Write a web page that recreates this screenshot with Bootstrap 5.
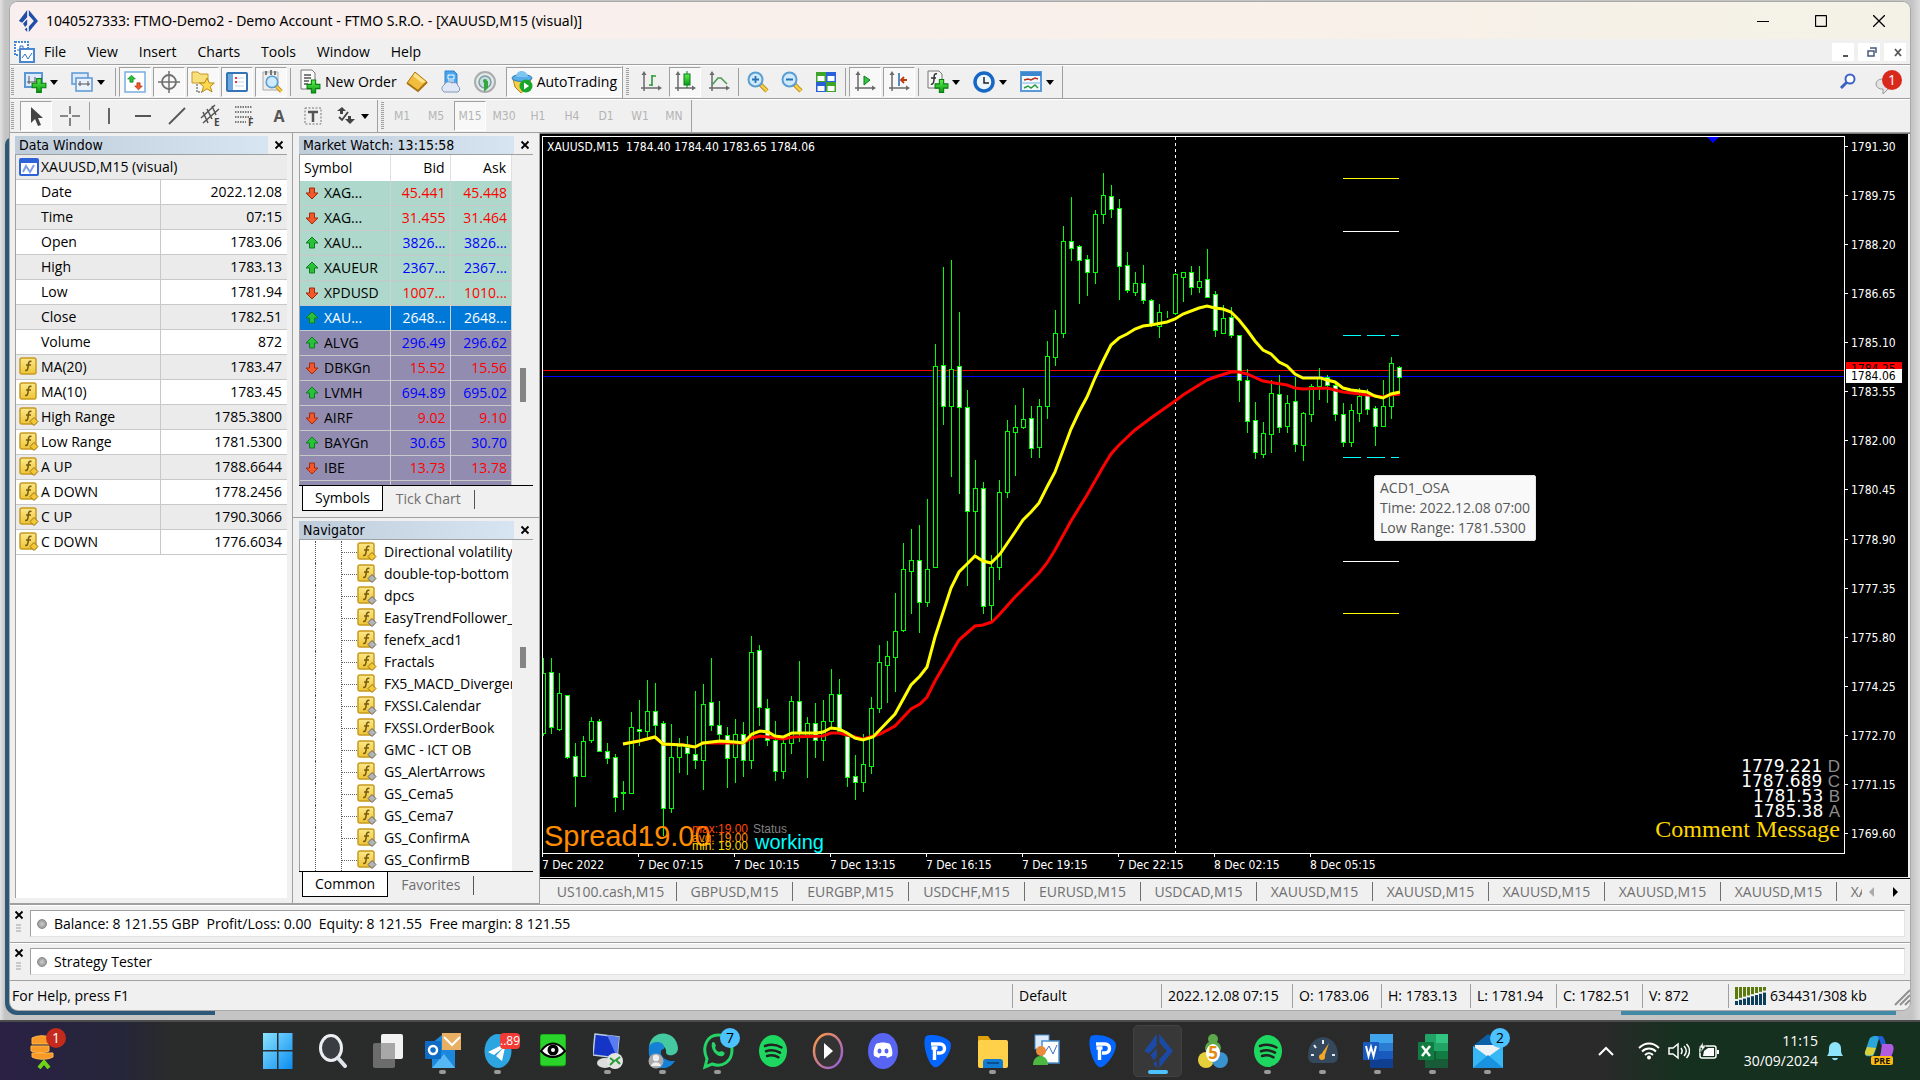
<!DOCTYPE html>
<html lang="en">
<head>
<meta charset="utf-8">
<meta name="viewport" content="width=device-width, initial-scale=1">
<title>Trading terminal</title>
<link href="https://cdn.jsdelivr.net/npm/bootstrap@5.3.0/dist/css/bootstrap.min.css" rel="stylesheet">
<style>
:root{--face:#f0f0f0;--line:#a0a0a0;--ui:"Open Sans","Noto Sans",sans-serif;--tah:"DejaVu Sans Condensed","Noto Sans",sans-serif}
body{font-family:var(--ui);font-size:14px;line-height:20px;color:#000;background:#cfcfcf;overflow:hidden}
button{font:inherit;color:inherit;border:0;background:none;padding:0}
svg{display:block;flex:none}
.desk{background:linear-gradient(90deg,#e2e2e2,#c4c4c4 5px,#c4c4c4 calc(100% - 8px),#dcdcdc);padding:2px 10px 10px}
.backwin{left:5px;top:137px;bottom:5px;width:210px;background:#2d5878;border-radius:8px 0 0 12px}
.backteal{right:24px;bottom:5px;width:275px;height:6px;background:#4289a5}
.appwin{background:var(--face);border-radius:8px;overflow:hidden;position:relative;box-shadow:0 0 0 1px #a9a9a9}
.titlebar{height:37px;padding-right:2px;background:linear-gradient(90deg,#f9efef,#f9f0ea 60%,#f4f2e6)}
.titlebar .ttl{font-family:"Noto Sans","Open Sans",sans-serif}
.titlebar .wbtn{width:58px;height:37px}
.menubar{height:26px;border-bottom:1px solid var(--line)}
.menubar a{color:#000;text-decoration:none;padding:0 11px 0 10px}
.menubar svg{margin:0 -2px 0 4px}
.tbar{height:34px;border-bottom:1px solid var(--line);border-top:1px solid #fff}
.tgroup{height:32px;border-right:1px solid var(--line)}
.tgroup + .tgroup{margin-left:2px}
.grip{width:3px;height:28px;margin:0 5px 0 1px;background:repeating-linear-gradient(#a0a0a0 0 1px,#f0f0f0 1px 2px)}
.tf .grip{margin-right:1px}
.tb{width:32px;height:30px;margin:0 1px;display:flex;align-items:center;justify-content:center}
.tb.on,.tbx.on{background:#f8f8f8;border-left:1px solid var(--line);border-top:1px solid var(--line);border-right:1px solid #fff;border-bottom:1px solid #fff}
.tbx{height:30px;display:flex;align-items:center}
.tdd{width:47px;height:30px;display:flex;align-items:center;padding-left:4px;gap:3px}
.caret{width:0;height:0;border:4px solid transparent;border-top:5px solid #000;border-bottom:0}
.tsep{width:1px;height:28px;background:var(--line);margin:0 2px}
.tf{font-family:var(--tah);font-size:12px;color:#b4b4b4}
.dock{border-right:1px solid var(--line);border-bottom:1px solid var(--line)}
.dockw{width:283px;padding:3px 5px 5px}
.docks{width:247px}
.ptitle{height:18px;font-family:var(--tah);font-size:14px;line-height:18px;margin-right:-5px}
.ptitle .cap{width:253px;padding-left:4px;background:linear-gradient(90deg,#bfcddb,#d7e4f2)}
.docks .ptitle .cap{width:215px}
.ptitle button{width:22px;height:18px;flex:none;display:flex;align-items:center;justify-content:center}
.pane{background:#fff;border-top:1px solid var(--line);border-left:1px solid var(--line)}
.grid{width:100%;table-layout:fixed;border-collapse:separate;border-spacing:0}
.grid td,.grid th{height:25px;line-height:24px;padding:0 5px 0 0;border-bottom:1px solid #c8c8c8;font-weight:400;white-space:nowrap;overflow:hidden}
.grid .ic{display:inline-flex;align-items:center;justify-content:center;vertical-align:top;height:24px;width:24px}
.dw tr:nth-child(odd){background:#ebebeb}
.dw .ic{width:25px}
.dw td{border-left:1px solid #c8c8c8;text-align:right}
.mw .hd th{height:26px;border-right:1px solid #e0e0e0;border-bottom:0;text-align:right}
.mw td{border-right:1px solid #d0d0d0}
.mw td:not(:first-child){text-align:right;padding-right:4px}
.mw .grn{background:#aed8cb}.mw .prp{background:#928db0}.mw .sel{background:#0078d7;color:#fff}
.mw .dn td:not(:first-child){color:#f00}.mw .up td:not(:first-child){color:#00f}
.mw .sel td:not(:first-child){color:#fff}
.wfill{width:0}
.sbar{width:21px;flex:none;background:var(--face);position:relative}
.sbar i{position:absolute;left:8px;width:6px;background:#858585}
.sbar .t1{top:213px;height:34px}
.sbar .t2{top:107px;height:21px}
.ptabs{height:27px;border-top:1px solid #000;background:var(--face)}
.ptabs button{height:25px;color:#6f6f6f;padding:0 13px}
.ptabs .act{background:#fff;border:1px solid #000;border-top:0;color:#000;margin-left:3px;padding:0 12px}
.ptabs .bar{width:1px;height:19px;background:#555;margin-top:4px}
.mwpanel{height:385px;padding:3px 6px 5px;border-bottom:1px solid var(--line)}
.nvpanel{padding:3px 6px 5px}
.mwlist{height:330px;overflow:hidden}
.navpane{height:0}
.tree{overflow:hidden;padding-top:1px}
.tree li{height:22px;line-height:22px;white-space:nowrap;padding-left:15px;display:flex;align-items:center}
.tree i{flex:none}
.tree .b1{width:26px;height:22px;border-left:1px dotted #555}
.tree .b2{width:16px;height:22px;border-left:1px dotted #555;background:repeating-linear-gradient(90deg,#666 0 1px,transparent 1px 2px) 0 11px/100% 1px no-repeat}
.tree svg{margin:0 7px 0 0}
.workarea{min-height:0}
.chartcol{border-top:1px solid #777;min-width:0}
.chartbox{background:#000;margin-right:2px;padding:2px 0 0 2px;color:#fff;font-family:var(--tah);font-size:12px;line-height:14px}
.plot{border:1px solid #fff;position:relative;min-width:0;overflow:hidden}
.ohlc{left:4px;top:3px;white-space:pre}
.paxis{width:63px;position:relative;padding:4px 0 13px}
.paxis span{padding-left:6px;position:relative}
.paxis span::before{content:"";position:absolute;left:-1px;top:6px;width:4px;height:1px;background:#fff}
.nowtag,.asktag{position:absolute;left:1px;width:56px;height:14px;padding-left:5px;color:#000}
.nowtag{top:233px;background:#fff}
.asktag{top:226px;background:#f00}
.taxis{height:23px;overflow:hidden}
.taxis span{width:96px;flex:none;position:relative;padding-top:4px;white-space:nowrap}
.taxis span::before{content:"";position:absolute;left:0;top:0;width:1px;height:3px;background:#fff}
.lvl{position:absolute;right:4px;bottom:14px;text-align:right}
.lvl div{font:17px/15px "DejaVu Sans",sans-serif}
.lvl b{font-weight:400;color:#8c8c8c;display:inline-block;font-family:"Liberation Sans",sans-serif}
.lvl .cm{font:24px/20px "Liberation Serif",serif;color:#ffd700}
.tip{position:absolute;left:831px;top:338px;background:#f9f9f9;border:1px solid #e5e5e5;border-radius:2px;color:#575757;font-family:var(--ui);font-size:14px;line-height:20px;padding:2px 5px;white-space:nowrap}
.ctabs{height:26px;border-top:1px solid #000;margin-top:1px;color:#6f6f6f}
.ctabs button{width:116px;flex:none;height:19px;line-height:19px;border-right:1px solid #6f6f6f;white-space:nowrap}
.ctabs button:first-child{width:132px;margin-left:5px}
.ctabs .scr{width:auto;border:0}
.infobar{height:38px;border-top:1px solid var(--line);box-shadow:inset 0 1px #fff;padding:5px 5px 5px 4px}
.infobar .box{border:1px solid #e3e3e3;border-top-color:var(--line);border-left-color:var(--line);background:#fff;padding-left:6px;gap:7px;white-space:pre}
.infobar .side{width:16px}
.dot{width:10px;height:10px;border-radius:50%;background:radial-gradient(#ccc,#888);border:1px solid #888}
.status{height:30px;border-top:1px solid var(--line);padding:1px 0 0 2px}
.status span{border-left:1px solid var(--line);height:24px;line-height:24px;padding-left:6px;white-space:nowrap;flex:none}
.status .s150{width:149px}.status .s130{width:131px}.status .s90{width:89px}.status .s86{width:86px}.status .s180{width:182px}
.taskbar{height:60px;background:linear-gradient(90deg,#2a2144,#25263a 120px,#2a2b2b 170px,#2a2a2a 1600px,#16301f 1680px,#16301f);border-top:2px solid #4c4c4c;color:#fff}
.widg{width:250px}
.tk{width:55px;height:58px;position:relative;display:flex;align-items:center;justify-content:center}
.tk.run::after{content:"";position:absolute;bottom:6px;left:24px;width:7px;height:4px;border-radius:2px;background:#9a9a9a}
.tk.cur::before{content:"";position:absolute;inset:3px;background:#383838;border:1px solid #424242;border-radius:5px}
.tk.cur::after{content:"";position:absolute;bottom:6px;left:18px;width:20px;height:4px;border-radius:2px;background:#4cc2ff}
.tk svg{position:relative}
.nb{position:absolute;z-index:2;left:30px;top:6px;width:20px;height:20px;border-radius:10px;background:#4cc2ff;color:#000;font-size:14px;line-height:20px;text-align:center}
.nb.red{background:#c42b1c;color:#fff}
.nb.tg{background:#f33b36;color:#fff;border-radius:4px;height:16px;line-height:16px;font-size:12px;top:11px}
.tray{padding-right:26px}
.tray .bell{margin-right:20px}
</style>
</head>
<body class="vh-100 d-flex flex-column">

<svg width="0" height="0" class="position-absolute" aria-hidden="true">
<defs>
<linearGradient id="gold" x1="0" y1="0" x2="0" y2="1"><stop offset="0" stop-color="#fbe88b"/><stop offset="1" stop-color="#edc535"/></linearGradient>
<linearGradient id="grn" x1="0" y1="0" x2="0" y2="1"><stop offset="0" stop-color="#5df04e"/><stop offset="1" stop-color="#0a9a16"/></linearGradient>
<linearGradient id="win" x1="0" y1="0" x2="1" y2="1"><stop offset="0" stop-color="#8be3ff"/><stop offset="1" stop-color="#0a8cf0"/></linearGradient>
<linearGradient id="ring" x1="0" y1="0" x2="1" y2="1"><stop offset="0" stop-color="#ff9a3c"/><stop offset="1" stop-color="#8e5be0"/></linearGradient>
<symbol id="fx" viewBox="0 0 20 20"><rect x="1" y="1" width="16" height="16" rx="2" fill="url(#gold)" stroke="#c79a1e" stroke-width="1.500"/><path d="M12.500 4.500c-3-1-3 2-3.300 4.500-.3 3-.8 5-3 4.300M7 8h5" fill="none" stroke="#7a5a10" stroke-width="1.600"/></symbol>
<symbol id="fxy" viewBox="0 0 20 20"><use href="#fx"/><path d="M15 10.500l4 4-4 4-4-4z" fill="#f2c838" stroke="#9b7410"/></symbol>
<symbol id="fxg" viewBox="0 0 20 20"><use href="#fx"/><path d="M15 10.500l4 4-4 4-4-4z" fill="#b4b4b4" stroke="#666"/></symbol>
<symbol id="aup" viewBox="0 0 14 14"><path d="M7 1l6 6H9.500v5h-5V7H1z" fill="#27c23a" stroke="#117a1e"/></symbol>
<symbol id="adn" viewBox="0 0 14 14"><path d="M7 13L1 7h3.500V2h5v5H13z" fill="#f2562b" stroke="#a02b0c"/></symbol>
<symbol id="xx" viewBox="0 0 10 10"><path d="M1.500 1.500l7 7M8.500 1.500l-7 7" stroke="#000" stroke-width="1.800"/></symbol>
<symbol id="ftmo" viewBox="0 0 24 24"><path d="M11 0v8L5 14l-4-2z M6 15l5-5v6l-2.500 2.500z M11 19v5l-3-3z"/><path d="M13 0l11 12-11 12v-6l6-6-6-6z"/></symbol>
<symbol id="axes" viewBox="0 0 22 22"><path d="M4 3v17M1 17h17" fill="none" stroke="#6a6a6a" stroke-width="1.500"/><path d="M4 0L1.500 4h5zM22 17l-4-2.500v5z" fill="#6a6a6a"/></symbol>
<symbol id="lens" viewBox="0 0 22 22"><path d="M13.500 13.500l6.500 6.500" stroke="#b98a12" stroke-width="4.500"/><path d="M14 14l6 6" stroke="#f6cf4a" stroke-width="2.500"/><circle cx="8.500" cy="8.500" r="7" fill="#cfeafc" stroke="#5a9ed2" stroke-width="2"/></symbol>
<symbol id="plus" viewBox="0 0 14 14"><path d="M5 1h4v4h4v4H9v4H5V9H1V5h4z" fill="url(#grn)" stroke="#0a7d12"/></symbol>
<symbol id="spot" viewBox="0 0 28 32"><ellipse cx="14" cy="16" rx="14" ry="16" fill="#1ed760"/><path d="M6 11c6-2 12-1 16.500 1.500M7 16.200c5-1.500 10-.8 14 1.500M8 21c4-1.200 8-.7 11.500 1.300" fill="none" stroke="#222" stroke-width="2.500" stroke-linecap="round"/></symbol>
<symbol id="pp" viewBox="0 0 30 34"><path d="M3 2C10-1 24 3 27 8c4 6-6 22-13 25C6 36-2 8 3 2z" fill="#0566ff"/><path d="M8 10h9a4.500 4.500 0 010 9h-3M11.500 15v11M8.500 14h6" fill="none" stroke="#fff" stroke-width="3.400"/></symbol>
<symbol id="env" viewBox="0 0 30 34"><path d="M0 12L15 0l15 12v22H0z" fill="#0a5fa8"/><path d="M2 11h26v12H2z" fill="#eef2f5"/><path d="M0 12l15 11 15-11v22H0z" fill="#35b8f5"/><path d="M0 34l15-13 15 13z" fill="#1993e0"/></symbol>
</defs></svg>

<main class="desk flex-grow-1 d-flex flex-column position-relative">
<div class="backwin position-absolute"></div><div class="backteal position-absolute"></div>
<section class="appwin flex-grow-1 d-flex flex-column">

<header class="titlebar d-flex align-items-center">
  <svg class="ms-2" width="20" height="22" viewBox="0 0 24 24" preserveAspectRatio="none" fill="#1f4fa8"><use href="#ftmo"/></svg>
  <span class="ttl ps-2 flex-grow-1">1040527333: FTMO-Demo2 - Demo Account - FTMO S.R.O. - [XAUUSD,M15 (visual)]</span>
  <button class="wbtn" aria-label="Minimize"><svg class="m-auto" width="12" height="12"><path d="M0 6.500h12" stroke="#000"/></svg></button>
  <button class="wbtn" aria-label="Maximize"><svg class="m-auto" width="12" height="12"><rect x=".5" y=".5" width="11" height="11" rx="1" fill="none" stroke="#000" stroke-width="1.300"/></svg></button>
  <button class="wbtn" aria-label="Close"><svg class="m-auto" width="12" height="12"><path d="M0 0l12 12M12 0L0 12" stroke="#000" stroke-width="1.300"/></svg></button>
</header>

<nav class="menubar d-flex align-items-center">
  <svg width="22" height="22"><rect x="1" y="1" width="13" height="13" fill="#fff" stroke="#4a86d0" stroke-width="2" stroke-dasharray="2 1"/><path d="M3 9h3V5h3v5h3" fill="none" stroke="#2f6fc0"/><rect x="6" y="8" width="14" height="13" fill="#fff" stroke="#4a86d0" stroke-width="2"/><path d="M8 17l3-4 3 5 4-6" fill="none" stroke="#2f6fc0"/></svg>
  <a href="#">File</a><a href="#">View</a><a href="#">Insert</a><a href="#">Charts</a><a href="#">Tools</a><a href="#">Window</a><a href="#">Help</a>
  <div class="ms-auto d-flex gap-1 pe-1">
    <button class="bg-white px-1" aria-label="Minimize chart"><svg width="12" height="18"><path d="M3 13h5" stroke="#555" stroke-width="2"/></svg></button>
    <button class="bg-white px-1" aria-label="Restore chart"><svg width="12" height="18"><path d="M4 5h6v5M2 8h6v5H2z" fill="none" stroke="#44597a" stroke-width="1.500"/></svg></button>
    <button class="bg-white px-1" aria-label="Close chart"><svg width="12" height="18"><path d="M3 6l6 7M9 6l-6 7" stroke="#555" stroke-width="1.800"/></svg></button>
  </div>
</nav>

<div class="tbar d-flex align-items-center">
  <div class="tgroup d-flex align-items-center"><i class="grip"></i>
    <button class="tdd" aria-label="New chart"><svg width="24" height="26"><rect x="2" y="4" width="17" height="14" fill="#dceafb" stroke="#5b97d4" stroke-width="2"/><path d="M6 7v8M4 13h11M12 8v5" stroke="#555" fill="none"/><use href="#plus" x="8" y="8" width="16" height="17"/></svg><i class="caret"></i></button>
    <button class="tdd" aria-label="Profiles"><svg width="24" height="26"><rect x="2" y="4" width="16" height="11" fill="#dceafb" stroke="#5b97d4" stroke-width="1.500"/><rect x="6" y="9" width="16" height="13" fill="#e8f1fc" stroke="#5b97d4" stroke-width="1.500"/><path d="M8 15h12M10 12v5M18 12v5" stroke="#555"/></svg><i class="caret"></i></button>
    <i class="tsep"></i>
    <button class="tb on" aria-label="Market Watch"><svg width="22" height="22"><rect x="1" y="1" width="20" height="20" fill="#fff" stroke="#7aaede" stroke-width="1.500"/><use href="#aup" x="3" y="3" width="9" height="10"/><use href="#adn" x="10" y="10" width="9" height="10"/></svg></button>
    <button class="tb on" aria-label="Data Window"><svg width="22" height="22"><circle cx="11" cy="11" r="7" fill="none" stroke="#707070" stroke-width="1.800"/><path d="M11 0v22M0 11h22" stroke="#707070" stroke-width="1.500"/></svg></button>
    <button class="tb on" aria-label="Navigator"><svg width="24" height="24"><path d="M1 2h6l2 2h8v9H1z" fill="#f7df7c" stroke="#c69a26"/><path d="M6 14v8h5" stroke="#444" stroke-dasharray="2 1" fill="none"/><path d="M16 8l2.300 5h5l-4 3.500 1.700 5.500-5-3.200-5 3.200 1.500-5.500-4-3.500h5z" fill="#ffd84d" stroke="#b88914"/></svg></button>
    <button class="tb on" aria-label="Terminal"><svg width="22" height="22"><rect x="1" y="2" width="20" height="18" rx="1" fill="#fff" stroke="#3575b5" stroke-width="2"/><rect x="2" y="3" width="5" height="16" fill="#6fa8e0"/><path d="M9 7h9M9 11h9M9 15h9" stroke="#c5d5e8"/><path d="M9 7h2M9 11h2" stroke="#e33" stroke-width="2"/></svg></button>
    <button class="tb on" aria-label="Strategy Tester"><svg width="24" height="26"><path d="M4 3h15v18H4z" fill="#ededed" stroke="#aaa"/><path d="M7 2v4M12 1v5M16 2v4" stroke="#777" stroke-width="2"/><use href="#lens" x="6" y="6" width="18" height="18"/></svg></button>
    <i class="tsep"></i>
    <button class="tbx ps-1 gap-1"><svg width="24" height="26"><path d="M4 1h11l3 3v16H4z" fill="#fafafa" stroke="#777"/><path d="M7 6h7M7 9h7M7 12h5M7 15h4" stroke="#555" stroke-width="1.500"/><use href="#plus" x="9" y="10" width="15" height="15"/></svg>New Order</button>
    <button class="tb ms-1" aria-label="MetaEditor"><svg width="24" height="24"><path d="M10 2l12 10-9 9L2 13z" fill="#f0bd3e" stroke="#a97312"/><path d="M10 3l11 9-4 1-9-7z" fill="#ffe389"/><path d="M2 13l11 8 9-9" fill="none" stroke="#a97312" stroke-width="2"/></svg></button>
    <button class="tb" aria-label="Virtual hosting"><svg width="24" height="24"><path d="M6 1h9l3 3v11H6z" fill="#49a4ec" stroke="#2f84d0"/><path d="M9 5h6v4H9zM9 11h6" stroke="#fff" fill="none"/><path d="M5 22a4 4 0 010-7 5 5 0 018-2 4 4 0 016 3 3.500 3.500 0 010 6z" fill="#dfe8f4" stroke="#8197b8"/></svg></button>
    <button class="tb" aria-label="Signals"><svg width="24" height="24"><circle cx="12" cy="12" r="10" fill="#e3e8e8" stroke="#a9adad" stroke-width="2"/><circle cx="12" cy="12" r="6" fill="#c8dde2" stroke="#7f9ca2" stroke-width="1.500"/><circle cx="12" cy="11" r="2" fill="#35a83c"/><path d="M11 11h4v7l-4 4z" fill="#35a83c"/></svg></button>
    <button class="tbx on ms-1 ps-1 pe-1 gap-1"><svg width="22" height="26"><path d="M2 10h18l-3 8-7 6-6-6z" fill="#f6cf4a" stroke="#b18617"/><ellipse cx="11" cy="9" rx="10" ry="3.500" fill="#57ade8" stroke="#2a7cba"/><path d="M5 8c0-8 11-8 12 0z" fill="#7cc4f2"/><circle cx="15" cy="17" r="6.500" fill="#19a52a"/><path d="M13 13.500l5 3.500-5 3.500z" fill="#fff"/></svg>AutoTrading</button>
  </div>
  <div class="tgroup d-flex align-items-center"><i class="grip"></i>
    <button class="tb" aria-label="Bar chart"><svg width="22" height="22"><use href="#axes" width="22" height="22"/><path d="M12 4v11M12 14H9M12 5h4" stroke="#2a9a38" stroke-width="1.600"/></svg></button>
    <button class="tb on" aria-label="Candlesticks"><svg width="22" height="22"><use href="#axes" width="22" height="22"/><path d="M13 0v17" stroke="#0b7d18"/><rect x="10" y="3" width="6" height="11" fill="url(#grn)" stroke="#0b7d18"/></svg></button>
    <button class="tb" aria-label="Line chart"><svg width="22" height="22"><use href="#axes" width="22" height="22"/><path d="M4 14l6-7h3l6 6" stroke="#4a9c55" stroke-width="1.600" fill="none"/></svg></button>
    <i class="tsep"></i>
    <button class="tb" aria-label="Zoom in"><svg width="22" height="22"><use href="#lens" width="22" height="22"/><path d="M5 8.500h7M8.500 5v7" stroke="#2772b3" stroke-width="1.800"/></svg></button>
    <button class="tb" aria-label="Zoom out"><svg width="22" height="22"><use href="#lens" width="22" height="22"/><path d="M5 8.500h7" stroke="#2772b3" stroke-width="1.800"/></svg></button>
    <button class="tb" aria-label="Tile windows"><svg width="22" height="22"><path d="M1 1h10v10H1zM11 11h10v10H11z" fill="#3da52a"/><path d="M11 1h10v10H11zM1 11h10v10H1z" fill="#2b5fd8"/><path d="M2.500 5h7v5h-7zM12.500 5h7v5h-7zM2.500 15h7v5h-7zM12.500 15h7v5h-7z" fill="#fff"/></svg></button>
    <i class="tsep"></i>
    <button class="tb on" aria-label="Auto scroll"><svg width="22" height="22"><use href="#axes" width="22" height="22"/><path d="M10 5l6 4-6 5z" fill="#35c445" stroke="#0b7d18"/></svg></button>
    <button class="tb on" aria-label="Chart shift"><svg width="22" height="22"><use href="#axes" width="22" height="22"/><path d="M11 2v13" stroke="#2772b3" stroke-width="1.600"/><path d="M13 9h6M16 6l-3 3 3 3" stroke="#c03a10" stroke-width="1.800" fill="none"/></svg></button>
    <i class="tsep"></i>
    <button class="tdd" aria-label="Indicators"><svg width="24" height="26"><path d="M3 2h11l3 3v14H3z" fill="#f5f5f5" stroke="#777"/><path d="M12 5c-3-1-3 2-3 5s-1 6-3 5M6 9h5" fill="none" stroke="#333" stroke-width="1.500"/><use href="#plus" x="9" y="9" width="15" height="16"/></svg><i class="caret"></i></button>
    <button class="tdd" aria-label="Periodicity"><svg width="24" height="24"><circle cx="12" cy="12" r="9" fill="#eef6fd" stroke="#1668c4" stroke-width="3.500"/><path d="M12 7v6h5" fill="none" stroke="#222" stroke-width="1.500"/></svg><i class="caret"></i></button>
    <button class="tdd" aria-label="Templates"><svg width="24" height="24"><rect x="2" y="2" width="20" height="19" fill="#f2f8fe" stroke="#5b9ad6" stroke-width="2"/><path d="M2 4h20" stroke="#3d87d0" stroke-width="4"/><path d="M5 10l4-1 3 1 4-2 3 1" stroke="#b8301a" stroke-width="1.500" fill="none"/><path d="M2 13h20" stroke="#7fb2e2"/><path d="M5 18l4-2 3 2 4-3 3 3" stroke="#2b9a35" stroke-width="1.500" fill="none"/></svg><i class="caret"></i></button>
  </div>
  <button class="ms-auto" aria-label="Search"><svg width="20" height="20"><circle cx="12" cy="7" r="4.500" fill="#fff" stroke="#3b62c4" stroke-width="2"/><path d="M8.500 10.500L3 16" stroke="#3b62c4" stroke-width="3"/></svg></button>
  <button class="ms-3 me-1" aria-label="Notifications"><svg width="32" height="28"><path d="M2 16a6 5 0 016-5h6a6 5 0 010 10l-5 5v-5a6 5 0 01-7-5z" fill="#e4e4e4" stroke="#999"/><circle cx="18" cy="12" r="10" fill="#d8291c"/><text x="18" y="17" fill="#fff" font-size="14" text-anchor="middle">1</text></svg></button>
</div>

<div class="tbar d-flex align-items-center">
  <div class="tgroup d-flex align-items-center"><i class="grip"></i>
    <button class="tb on" aria-label="Cursor"><svg width="18" height="22"><path d="M4 2v16l4-4 3 7 3-1-3-7h5z" fill="#444"/></svg></button>
    <button class="tb" aria-label="Crosshair"><svg width="20" height="20"><path d="M10 0v8M10 12v8M0 10h8M12 10h8" stroke="#666" stroke-width="1.600"/></svg></button>
    <i class="tsep"></i>
    <button class="tb" aria-label="Vertical line"><svg width="16" height="18"><path d="M8 1v16" stroke="#555" stroke-width="1.800"/></svg></button>
    <button class="tb" aria-label="Horizontal line"><svg width="16" height="16"><path d="M0 8h16" stroke="#555" stroke-width="1.800"/></svg></button>
    <button class="tb" aria-label="Trendline"><svg width="18" height="18"><path d="M1 17L17 1" stroke="#555" stroke-width="1.800"/></svg></button>
    <button class="tb" aria-label="Equidistant channel"><svg width="22" height="24"><path d="M1 14L15 1M3 19L19 5M3 8l5 11M7 5l5 10M12 2l4 9" stroke="#555" stroke-width="1.500"/><text x="14" y="22" font-size="10" font-weight="700" fill="#444">E</text></svg></button>
    <button class="tb" aria-label="Fibonacci"><svg width="22" height="24"><path d="M1 3h17M1 8h17M1 13h17M1 18h11" stroke="#555" stroke-width="1.500" stroke-dasharray="1.500 1"/><text x="14" y="22" font-size="10" font-weight="700" fill="#444">F</text></svg></button>
    <button class="tb" aria-label="Text"><svg width="18" height="20"><text x="9" y="16" font-size="16" font-weight="700" text-anchor="middle" fill="#555">A</text></svg></button>
    <button class="tb" aria-label="Text label"><svg width="20" height="20"><rect x="2" y="2" width="16" height="16" fill="none" stroke="#777" stroke-dasharray="2 1.500"/><path d="M5 6h10M10 6v10" stroke="#555" stroke-width="2.500"/></svg></button>
    <button class="tdd" aria-label="Arrows"><svg width="24" height="22"><path d="M3 6l5-4 4 4H9v3H6V6zM11 14h3v-3h3v3h4l-5 5z" fill="#444"/><path d="M5 12l3 3 6-8" stroke="#444" stroke-width="1.800" fill="none"/></svg><i class="caret"></i></button>
  </div>
  <div class="tgroup d-flex align-items-center tf"><i class="grip"></i>
    <button class="tb">M1</button><button class="tb">M5</button><button class="tb on">M15</button><button class="tb">M30</button><button class="tb">H1</button><button class="tb">H4</button><button class="tb">D1</button><button class="tb">W1</button><button class="tb">MN</button>
  </div>
</div>

<div class="workarea d-flex flex-grow-1">
  <aside class="dock dockw d-flex flex-column">
    <div class="ptitle d-flex"><span class="cap">Data Window</span><button aria-label="Close Data Window"><svg width="10" height="10"><use href="#xx"/></svg></button></div>
    <div class="pane flex-grow-1"><table class="grid dw"><colgroup><col style="width:53%"><col></colgroup><tbody id="dw"></tbody></table></div>
  </aside>
  <aside class="dock docks d-flex flex-column">
    <div class="mwpanel d-flex flex-column">
      <div class="ptitle d-flex"><span class="cap">Market Watch: 13:15:58</span><button aria-label="Close Market Watch"><svg width="10" height="10"><use href="#xx"/></svg></button></div>
      <div class="pane d-flex mwlist flex-grow-1"><div class="wfill flex-grow-1"><table class="grid mw"><colgroup><col style="width:43%"><col style="width:28%"><col></colgroup><tbody id="mw"></tbody></table></div><div class="sbar"><i class="t1"></i></div></div>
      <div class="ptabs d-flex"><button class="act">Symbols</button><button>Tick Chart</button><i class="bar"></i></div>
    </div>
    <div class="nvpanel d-flex flex-column flex-grow-1">
      <div class="ptitle d-flex"><span class="cap">Navigator</span><button aria-label="Close Navigator"><svg width="10" height="10"><use href="#xx"/></svg></button></div>
      <div class="pane navpane d-flex flex-grow-1"><ul class="tree wfill list-unstyled m-0 flex-grow-1" id="nv"></ul><div class="sbar"><i class="t2"></i></div></div>
      <div class="ptabs d-flex"><button class="act">Common</button><button>Favorites</button><i class="bar"></i></div>
    </div>
  </aside>

  <section class="chartcol flex-grow-1 d-flex flex-column">
    <div class="chartbox flex-grow-1 d-flex flex-column">
      <div class="d-flex flex-grow-1">
        <div class="plot flex-grow-1">
          <svg id="chart" width="100%" height="100%" class="position-absolute"></svg>
          <div class="ohlc position-absolute">XAUUSD,M15  1784.40 1784.40 1783.65 1784.06</div>
          <div class="lvl"><div>1779.221 <b>D</b></div><div>1787.689 <b>C</b></div><div>1781.53 <b>B</b></div><div>1785.38 <b>A</b></div><div class="cm">Comment Message</div></div>
          <div class="tip">ACD1_OSA<br>Time: 2022.12.08 07:00<br>Low Range: 1781.5300</div>
        </div>
        <div class="paxis d-flex flex-column justify-content-between" id="pax"><div class="asktag">1784.25</div><div class="nowtag">1784.06</div></div>
      </div>
      <div class="taxis d-flex"><span>7 Dec 2022</span><span>7 Dec 07:15</span><span>7 Dec 10:15</span><span>7 Dec 13:15</span><span>7 Dec 16:15</span><span>7 Dec 19:15</span><span>7 Dec 22:15</span><span>8 Dec 02:15</span><span>8 Dec 05:15</span></div>
    </div>
    <div class="ctabs d-flex align-items-center">
      <div class="wfill d-flex flex-grow-1 overflow-hidden"><button>US100.cash,M15</button><button>GBPUSD,M15</button><button>EURGBP,M15</button><button>USDCHF,M15</button><button>EURUSD,M15</button><button>USDCAD,M15</button><button>XAUUSD,M15</button><button>XAUUSD,M15</button><button>XAUUSD,M15</button><button>XAUUSD,M15</button><button>XAUUSD,M15</button><button>XAUUSD,M15</button></div>
      <button class="scr" aria-label="Scroll tabs"><svg width="48" height="12"><path d="M12 1v10L7 6z" fill="#aaa"/><path d="M31 1v10l5-5z" fill="#000"/></svg></button>
    </div>
  </section>
</div>

<div class="infobar d-flex"><div class="side"><svg width="10" height="10"><use href="#xx"/></svg><svg class="mt-1" width="8" height="9"><path d="M2 1h5M2 4h5M2 7h5" stroke="#a0a0a0"/></svg></div><div class="box flex-grow-1 d-flex align-items-center"><i class="dot"></i><span>Balance: 8 121.55 GBP  Profit/Loss: 0.00  Equity: 8 121.55  Free margin: 8 121.55</span></div></div>
<div class="infobar d-flex"><div class="side"><svg width="10" height="10"><use href="#xx"/></svg><svg class="mt-1" width="8" height="9"><path d="M2 1h5M2 4h5M2 7h5" stroke="#a0a0a0"/></svg></div><div class="box flex-grow-1 d-flex align-items-center"><i class="dot"></i><span>Strategy Tester</span></div></div>
<footer class="status d-flex align-items-center"><div class="flex-grow-1">For Help, press F1</div>
  <span class="s150">Default</span><span class="s130">2022.12.08 07:15</span><span class="s90">O: 1783.06</span><span class="s90">H: 1783.13</span><span class="s86">L: 1781.94</span><span class="s86">C: 1782.51</span><span class="s86">V: 872</span>
  <span class="s180 d-flex align-items-center gap-1"><svg width="31" height="18" id="net"></svg>634431/308 kb<svg class="ms-auto" width="16" height="20"><path d="M1 19L16 4M6 19l10-10M11 19l5-5" stroke="#909090" stroke-width="2"/></svg></span>
</footer>
</section>
</main>

<footer class="taskbar d-flex align-items-center">
  <div class="widg"><button class="tk ms-3" aria-label="Widgets"><svg width="28" height="36"><path d="M2 5c6-3 14-3 20 0v6H2zM1 13h18v5c-5 2-13 2-18 0zM2 20h21v4c-6 3-15 3-21 0z" fill="#f79a27" stroke="#ffb84d"/><path d="M9 35l5-6 5 6" fill="none" stroke="#6fd31a" stroke-width="4"/></svg><span class="nb red">1</span></button></div>
  <button class="tk" aria-label="Start"><svg width="30" height="36"><path d="M0 0h14v17H0zM15.500 0h14v17h-14zM0 18.500h14V36H0zM15.500 18.500h14V36h-14z" fill="url(#win)"/></svg></button>
  <button class="tk" aria-label="Search"><svg width="28" height="34"><ellipse cx="12" cy="14" rx="10.500" ry="12.500" fill="#3a3d42" stroke="#eceff2" stroke-width="3"/><path d="M19 24l7 8" stroke="#dfe5ea" stroke-width="4" stroke-linecap="round"/></svg></button>
  <button class="tk" aria-label="Task view"><svg width="30" height="34"><rect y="9" width="22" height="25" rx="2" fill="#6c6c6c"/><rect x="8" width="22" height="25" rx="2" fill="#f2f2f2"/><path d="M8 9h14v16H8z" fill="#a8a8a8"/></svg></button>
  <button class="tk run" aria-label="Outlook"><svg width="36" height="36"><path d="M7 10l11-9 12 9v25H7z" fill="#1b87dd"/><path d="M7 35l12-14 11 14z" fill="#55b8f5"/><rect y="8" width="16" height="18" rx="1" fill="#0f6cc4"/><circle cx="8" cy="17" r="4" fill="none" stroke="#fff" stroke-width="2.500"/><rect x="17" width="19" height="17" fill="#e9b063"/><path d="M19 4l8 8 8-8" fill="none" stroke="#fff" stroke-width="2"/></svg></button>
  <button class="tk run" aria-label="Telegram"><svg width="28" height="34"><ellipse cx="14" cy="17" rx="13.500" ry="17" fill="#2ca5e0"/><path d="M4 18l18-9-4 18-6-5 8-9-10 8z" fill="#fff"/></svg><span class="nb tg">..89</span></button>
  <button class="tk" aria-label="Eye"><svg width="26" height="34"><rect width="26" height="32" rx="3" fill="#2bd42b" stroke="#138a13"/><path d="M1 17c7-10 17-10 24 0-7 8-17 8-24 0z" fill="#fff" stroke="#000" stroke-width="2"/><circle cx="13" cy="16" r="5.500" fill="#000"/><circle cx="13" cy="16" r="2" fill="#fff"/></svg></button>
  <button class="tk run" aria-label="Remote desktop"><svg width="30" height="36"><path d="M2 1l24 3-2 21-24-3z" fill="#1535c8" stroke="#bcd" stroke-width="1.500"/><path d="M14 2l12 2-2 20z" fill="#5a7cf0"/><ellipse cx="12" cy="30" rx="8" ry="5" fill="#ddd"/><circle cx="22" cy="28" r="8" fill="#e4e4e4"/><path d="M17 25l4 3-4 4M27 24l-4 3 4 4" stroke="#2a9c36" stroke-width="2" fill="none"/></svg></button>
  <button class="tk run" aria-label="Edge"><svg width="30" height="36"><path d="M1 14C3-4 28-4 30 15c0 8-10 9-12 5 2-8-12-12-17-6z" fill="#45c9a0"/><path d="M1 13c5-7 17-4 15 3-6 0-4 13 11 12C20 40-2 38 1 13z" fill="#1580d6"/><circle cx="8" cy="28" r="7.500" fill="#aaa"/><circle cx="8" cy="25" r="3.200" fill="#eee"/><path d="M3 33c1-5 9-5 10 0" fill="#eee"/></svg></button>
  <button class="tk run" aria-label="WhatsApp"><svg width="32" height="38"><path d="M3 35l2-8C-1 14 6 3 16 3c9 0 14 7 14 15 0 11-9 18-20 14z" fill="none" stroke="#25d366" stroke-width="3"/><path d="M10 11c1-2 3-1 4 3-3 2 3 8 5 5 5 1 4 3 2 5-6 2-13-7-11-13z" fill="#25d366"/></svg><span class="nb">7</span></button>
  <button class="tk" aria-label="Spotify"><svg width="28" height="32"><use href="#spot"/></svg></button>
  <button class="tk" aria-label="Media player"><svg width="32" height="38"><ellipse cx="16" cy="19" rx="14" ry="17" fill="#333" stroke="url(#ring)" stroke-width="2.500"/><path d="M12 11l9 8-9 8z" fill="#fff"/></svg></button>
  <button class="tk" aria-label="Discord"><svg width="30" height="36"><ellipse cx="15" cy="18" rx="15" ry="18" fill="#5865f2"/><path d="M8 11c4-2 10-2 14 0 2 4 3 8 2 12l-5 2-1-2h-6l-1 2-5-2c-1-4 0-8 2-12z" fill="#fff"/><ellipse cx="11.500" cy="18" rx="2" ry="2.500" fill="#5865f2"/><ellipse cx="18.500" cy="18" rx="2" ry="2.500" fill="#5865f2"/></svg></button>
  <button class="tk" aria-label="P app"><svg width="30" height="34"><use href="#pp"/></svg></button>
  <button class="tk run" aria-label="File Explorer"><svg width="30" height="34"><path d="M0 2h10l3 4v6H0z" fill="#dfa00d"/><rect y="6" width="30" height="28" rx="2" fill="#ffd04a"/><path d="M5 34v-6a3 3 0 013-3h14a3 3 0 013 3v6z" fill="#117ad1"/><path d="M9 29h12" stroke="#0a4f91" stroke-width="2"/></svg></button>
  <button class="tk" aria-label="Accounts"><svg width="30" height="34"><rect x="2" y="1" width="14" height="14" fill="#dceafb" stroke="#4a90d0"/><rect x="9" y="7" width="17" height="22" fill="#fff" stroke="#4a90d0" stroke-width="1.500"/><path d="M12 18l4-6 4 8 4-9" stroke="#3c6fc4" fill="none"/><circle cx="8" cy="17" r="5" fill="#e88b3c"/><path d="M0 31c0-12 15-12 15 0z" fill="#4cb83f"/></svg></button>
  <button class="tk" aria-label="P app 2"><svg width="30" height="34"><use href="#pp"/></svg></button>
  <button class="tk cur" aria-label="Terminal"><svg width="30" height="34" viewBox="0 0 24 24" preserveAspectRatio="none" fill="#1b4aa5"><use href="#ftmo"/></svg></button>
  <button class="tk" aria-label="MetaTrader 5"><svg width="30" height="36"><circle cx="15" cy="6" r="5" fill="#5ca84a"/><ellipse cx="15" cy="15" rx="8" ry="7" fill="#5ca84a"/><circle cx="8" cy="27" r="8" fill="#e5cf3b"/><circle cx="22" cy="27" r="8" fill="#3a93cf"/><ellipse cx="15" cy="20" rx="7" ry="9" fill="#fff"/><text x="15" y="26" font-size="17" font-weight="700" text-anchor="middle" fill="#e38b10">5</text></svg></button>
  <button class="tk run" aria-label="Spotify 2"><svg width="28" height="32"><use href="#spot"/></svg></button>
  <button class="tk run" aria-label="Gauge"><svg width="32" height="30"><path d="M1 20C1-5 31-5 31 20c0 5-3 7-6 7H7c-3 0-6-2-6-7z" fill="#34495e"/><path d="M4 19h3M25 19h3M16 4v4M7 9l2 3" stroke="#e8edf2" stroke-width="2"/><path d="M13 20l9-13-5 15z" fill="#f5a623"/><circle cx="15" cy="21" r="3" fill="#f5a623"/></svg></button>
  <button class="tk run" aria-label="Word"><svg width="30" height="36"><rect x="7" y="1" width="23" height="34" rx="1" fill="#2b7cd3"/><path d="M7 1h23v9H7z" fill="#41a5ee"/><path d="M7 18h23v8H7z" fill="#185abd"/><path d="M7 26h23v9H7z" fill="#103f91"/><rect y="9" width="16" height="18" rx="1" fill="#185abd"/><path d="M3 13l2.500 10L8 14l2.500 9L13 13" fill="none" stroke="#fff" stroke-width="2"/></svg></button>
  <button class="tk run" aria-label="Excel"><svg width="30" height="36"><rect x="7" y="1" width="23" height="34" rx="1" fill="#21a366"/><path d="M18 1h12v9H18z" fill="#33c481"/><path d="M7 18h23v17H7z" fill="#185c37"/><path d="M18 18h12v8H18z" fill="#107c41"/><rect y="9" width="16" height="18" rx="1" fill="#107c41"/><path d="M4 13l8 10M12 13L4 23" stroke="#fff" stroke-width="2.500"/></svg></button>
  <button class="tk run" aria-label="Mail"><svg width="30" height="34"><use href="#env"/></svg><span class="nb">2</span></button>
  <div class="tray ms-auto d-flex align-items-center">
    <svg class="me-4" width="16" height="10"><path d="M1 9l7-7 7 7" fill="none" stroke="#fff" stroke-width="2"/></svg>
    <svg class="me-2" width="22" height="18"><path d="M1 6c6-6 14-6 20 0M4 9.500c4-4 10-4 14 0M7 13c2.500-2.500 5.500-2.500 8 0" fill="none" stroke="#fff" stroke-width="1.800"/><circle cx="11" cy="15.500" r="2" fill="#fff"/></svg>
    <svg class="me-2" width="22" height="18"><path d="M1 6h4l5-4v14l-5-4H1z" fill="none" stroke="#fff" stroke-width="1.500"/><path d="M13 6c1.500 2 1.500 4 0 6M16 4c3 3 3 7 0 10M18.500 2c4 4 4 10 0 14" fill="none" stroke="#fff" stroke-width="1.500"/></svg>
    <svg class="me-4" width="22" height="18"><rect x="2" y="4" width="16" height="12" rx="2" fill="none" stroke="#fff" stroke-width="1.500"/><path d="M5 14l1-5 4-3h6v8z" fill="#fff"/><path d="M19 8h2v4h-2z" fill="#fff"/><path d="M5 0L1 6h3l-2 5 6-7H5z" fill="#fff" stroke="#16301f" stroke-width=".5"/></svg>
    <div class="text-end me-2">11:15<br>30/09/2024</div>
    <svg class="bell" width="18" height="20"><path d="M1 15c2-2 2-5 2-8a6 6 0 0112 0c0 3 0 6 2 8z" fill="#8fe3fb"/><path d="M6 17h6c-1 3-5 3-6 0z" fill="#8fe3fb"/></svg>
    <svg width="30" height="30"><path d="M1 16L5 4c1-3 3-4 6-4h6c-4 3-4 14-8 20-3 0-9 2-8-4z" fill="#2ba6d8"/><path d="M1 16c-1 4 4 4 8 3l3-7-9-1z" fill="#d9cf3b"/><path d="M13 0h4c3 0 4 5 5 8l-5 1c-1-4-2-7-4-9z" fill="#1f5fd8"/><path d="M18 8h9c3 1 3 5 2 8l-3 8H14c3-4 3-10 4-16z" fill="#b05be0"/><rect x="7" y="20" width="22" height="9" rx="2" fill="#fdb913"/><text x="18" y="28" font-size="9" font-weight="700" text-anchor="middle" fill="#111">PRE</text></svg>
  </div>
</footer>

<script>
const byId=id=>document.getElementById(id);
const icon=(n,s)=>`<svg width="${s}" height="${s}"><use href="#${n}" width="${s}" height="${s}"/></svg>`;

const values=[['','Date','2022.12.08'],['','Time','07:15'],['','Open','1783.06'],['','High','1783.13'],['','Low','1781.94'],['','Close','1782.51'],['','Volume','872'],['fx','MA(20)','1783.47'],['fx','MA(10)','1783.45'],['fxy','High Range','1785.3800'],['fxy','Low Range','1781.5300'],['fxy','A UP','1788.6644'],['fxy','A DOWN','1778.2456'],['fxy','C UP','1790.3066'],['fxy','C DOWN','1776.6034']];
byId('dw').innerHTML=`<tr><th colspan="2"><span class="ic"><svg width="20" height="18"><rect x="1" y="1" width="18" height="16" rx="1" fill="#fff" stroke="#2d62d8" stroke-width="2"/><path d="M1 3h18" stroke="#2d62d8" stroke-width="4"/><path d="M4 14l3-6 4 6 4-7" fill="none" stroke="#7f9fe8" stroke-width="2"/></svg></span>XAUUSD,M15 (visual)</th></tr>`+
 values.map(v=>`<tr><th><span class="ic">${v[0]?icon(v[0],20):''}</span>${v[1]}</th><td>${v[2]}</td></tr>`).join('');

const quotes=[['grn','dn','XAG...','45.441','45.448'],['grn','dn','XAG...','31.455','31.464'],['grn','up','XAU...','3826...','3826...'],['grn','up','XAUEUR','2367...','2367...'],['grn','dn','XPDUSD','1007...','1010...'],['sel','up','XAU...','2648...','2648...'],['prp','up','ALVG','296.49','296.62'],['prp','dn','DBKGn','15.52','15.56'],['prp','up','LVMH','694.89','695.02'],['prp','dn','AIRF','9.02','9.10'],['prp','up','BAYGn','30.65','30.70'],['prp','dn','IBE','13.73','13.78'],['prp','','','','']];
byId('mw').innerHTML='<tr class="hd"><th class="text-start ps-1">Symbol</th><th>Bid</th><th>Ask</th></tr>'+
 quotes.map(q=>`<tr class="${q[0]} ${q[1]}"><td><span class="ic">${q[1]?icon(q[1]=='up'?'aup':'adn',14):''}</span>${q[2]}</td><td>${q[3]}</td><td>${q[4]}</td></tr>`).join('');

const tree=['yDirectional volatility','gdouble-top-bottom','gdpcs','gEasyTrendFollower_v','gfenefx_acd1','yFractals','yFX5_MACD_Divergence','gFXSSI.Calendar','gFXSSI.OrderBook','gGMC - ICT OB','gGS_AlertArrows','gGS_Cema5','gGS_Cema7','gGS_ConfirmA','gGS_ConfirmB'];
byId('nv').innerHTML=tree.map(t=>`<li><i class="b1"></i><i class="b2"></i>${icon('fx'+t[0],20)}${t.slice(1)}</li>`).join('');

let ax='';for(let i=0;i<15;i++)ax+=`<span>${(1791.3-1.55*i).toFixed(2)}</span>`;
byId('pax').insertAdjacentHTML('afterbegin',ax);

let net='';for(let i=0;i<8;i++){const h=4+i*1.2;net+=`<rect x="${i*4}" y="0" width="3" height="${17-h-1}" fill="#5a7a0c"/><rect x="${i*4}" y="${18-h}" width="3" height="${h}" fill="#0d3f5c"/>`}
byId('net').innerHTML=net;

/* candles: high, body top, body bottom, low, 1 = bearish */
const candles=`658,673,733,735,0 658,672,727,733,1 673,693,729,730,0 695,695,757,758,1 743,756,776,806,1 736,741,776,776,0 717,721,740,742,0 719,721,751,751,1 743,751,758,763,1 754,757,797,811,1 781,792,793,809,0 712,727,793,793,0 700,729,731,745,1 680,711,731,737,0 683,711,725,737,1 721,723,808,835,1 724,757,808,812,0 738,746,757,772,0 736,747,753,774,1 691,754,760,768,1 684,704,760,789,0 658,702,725,730,1 701,725,734,742,1 727,735,758,787,1 719,734,757,782,0 722,734,760,776,1 636,652,760,768,0 645,650,707,725,1 699,708,740,745,1 721,740,771,780,1 740,743,771,778,0 696,701,743,753,0 661,701,732,741,1 717,723,735,777,0 703,723,740,757,1 700,721,740,760,0 669,694,721,728,0 679,694,731,732,1 733,736,777,786,1 755,776,782,799,1 734,764,782,791,0 697,708,766,773,0 645,662,708,712,0 641,656,665,702,0 593,631,657,691,0 543,569,630,631,0 529,560,571,613,0 525,560,602,632,1 499,569,602,606,0 344,366,567,567,0 267,365,406,424,1 260,369,406,476,0 312,366,407,493,1 390,407,511,585,1 460,488,511,553,0 482,488,606,613,1 555,567,605,621,0 480,492,567,579,0 420,431,492,497,0 405,427,432,475,0 388,419,427,428,0 406,418,448,457,1 399,406,447,457,0 341,356,406,418,0 310,333,357,365,0 226,241,333,337,0 197,241,248,260,1 245,246,260,303,1 255,259,272,295,1 210,214,272,283,0 173,195,214,223,0 185,196,209,217,1 199,208,266,299,1 252,265,290,292,1 272,283,292,295,0 265,283,300,303,1 299,300,325,326,1 304,312,326,337,0 311,313,313,317,0 273,274,313,314,0 272,272,277,301,0 266,272,287,294,1 266,281,287,292,0 249,279,297,297,1 291,294,330,336,1 305,318,333,333,0 307,317,335,337,1 335,335,380,401,1 369,380,421,432,1 402,420,452,458,1 422,433,454,457,0 380,393,434,452,0 375,394,427,432,1 395,403,426,432,0 377,401,444,451,1 412,413,445,460,0 384,386,414,421,0 368,377,386,399,0 375,377,385,402,1 384,385,414,420,1 403,414,442,446,1 404,410,442,446,0 388,396,413,421,0 389,395,409,414,1 406,408,426,445,1 380,406,426,426,0 357,363,406,418,0 366,367,377,390,1`.split(' ').map(c=>c.split(',').map(Number));
const fast='623,744 639,741 655,737 663,744 683,745 695,747 703,743 720,741 735,742 743,743 752,734 760,731 768,732 775,736 783,737 792,733 817,733 823,732 831,728 839,729 847,733 855,738 863,740 873,737 895,714 911,685 920,676 927,667 935,637 951,588 959,572 967,564 975,556 983,561 991,563 1000,554 1015,532 1023,520 1031,512 1039,503 1047,487 1055,472 1071,429 1079,412 1087,397 1095,378 1103,361 1111,345 1119,338 1127,334 1135,329 1143,326 1151,325 1167,322 1175,319 1183,314 1199,308 1207,306 1215,308 1223,309 1231,312 1239,320 1247,330 1255,341 1263,350 1271,354 1279,362 1287,366 1295,374 1303,378 1321,378 1327,380 1335,382 1343,388 1351,390 1367,392 1375,396 1383,398 1391,394 1400,392';
const slow='623,744 639,741 655,737 663,744 683,745 695,747 703,743 743,743 752,738 760,736 783,739 793,737 823,736 831,733 839,733 855,737 863,739 880,734 895,726 911,709 920,704 927,697 935,681 959,640 967,633 975,626 983,625 992,622 999,615 1015,597 1039,573 1047,563 1055,550 1071,521 1087,495 1103,467 1111,454 1119,445 1135,430 1151,418 1175,401 1183,395 1207,380 1215,377 1231,372 1239,372 1247,374 1263,381 1287,385 1295,388 1303,389 1327,388 1343,392 1360,394 1383,397 1391,395 1400,394';
let g='';
const hl=(x1,x2,y,c,w=1,d='')=>g+=`<path d="M${x1} ${y+.5}H${x2}" stroke="${c}" stroke-width="${w}" ${d?`stroke-dasharray="${d}"`:''}/>`;
g+='<path d="M1175.500 137V856" stroke="#fff" stroke-dasharray="3 3"/>';
hl(500,4000,370,'#f00');hl(500,4000,376,'#00f');
candles.forEach((c,i)=>{const x=543+8*i;
 g+=`<path d="M${x+.5} ${c[0]}V${c[3]+1}" stroke="#0f0"/>`;
 g+=`<rect x="${x-1.5}" y="${c[1]+.5}" width="4" height="${Math.max(c[2]-c[1],0)}" fill="${c[4]?'#fff':'#000'}" stroke="#0f0"/>`;});
hl(1343,1399,178,'#ff0');hl(1343,1399,231,'#fff');hl(1343,1399,335,'#0ff',1,'18 6');
hl(1343,1399,457,'#0ff',1,'18 6');hl(1343,1399,561,'#fff');hl(1343,1399,613,'#ff0');
g+=`<polyline points="${slow}" fill="none" stroke="#f00" stroke-width="3"/><polyline points="${fast}" fill="none" stroke="#ff0" stroke-width="3"/>`;
g+='<path d="M1707 137h12l-6 6z" fill="#00f"/>';
const t=(x,y,s,c,v)=>g+=`<text x="${x}" y="${y}" font-size="${s}" fill="${c}" font-family="Liberation Sans, sans-serif">${v}</text>`;
t(544,846,29,'#ff8c00','Spread:');t(638,846,29,'#ff8c00','19.00');
t(692,833,12,'#ff4500','max:19.00');t(692,842,12,'#ff8c00','avg: 19.00');t(692,850,12,'#ffd700','min: 19.00');
t(753,833,12,'#808080','Status');t(755,849,20,'#0ff','working');
byId('chart').innerHTML=`<g transform="translate(-543,-137)">${g}</g>`;
</script>
<script src="https://cdn.jsdelivr.net/npm/bootstrap@5.3.0/dist/js/bootstrap.bundle.min.js"></script>
</body>
</html>
